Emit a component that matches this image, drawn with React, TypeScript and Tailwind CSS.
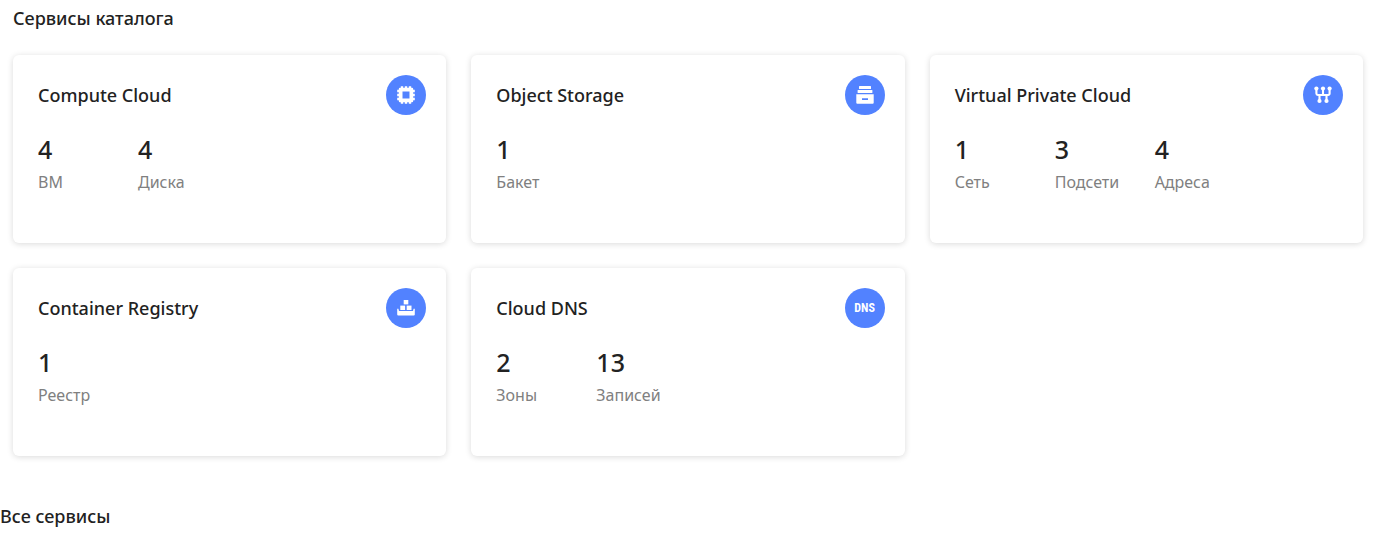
import type { ReactNode } from 'react';

type Stat = { value: number; label: string };
type Service = { name: string; href: string; icon: ReactNode; stats: Stat[] };

function IconSvg({ children }: { children: ReactNode }) {
  return (
    <svg viewBox="0 0 40 40" className="size-10" fill="currentColor" aria-hidden="true">
      {children}
    </svg>
  );
}

const chipIcon = (
  <IconSvg>
    <path
      fillRule="evenodd"
      d="M14.8 11.2h2.4v1.6h1.6v-1.6h2.4v1.6h1.6v-1.6h2.4v1.6h.8a1.2 1.2 0 0 1 1.2 1.2v.8h1.6v2.4h-1.6v1.6h1.6v2.4h-1.6v1.6h1.6v2.4h-1.6v.8a1.2 1.2 0 0 1-1.2 1.2h-.8v1.6h-2.4v-1.6h-1.6v1.6h-2.4v-1.6h-1.6v1.6h-2.4v-1.6H14a1.2 1.2 0 0 1-1.2-1.2v-.8h-1.6v-2.4h1.6v-1.6h-1.6v-2.4h1.6v-1.6h-1.6v-2.4h1.6V14a1.2 1.2 0 0 1 1.2-1.2h.8zM16.5 16.5v7h7v-7z"
    />
  </IconSvg>
);

const storageIcon = (
  <IconSvg>
    <rect x="14" y="11" width="12" height="3" rx=".5" />
    <rect x="12.6" y="15.1" width="14.8" height="2.9" rx=".5" />
    <path fillRule="evenodd" d="M11.3 19.2h17.4v8.6a1 1 0 0 1-1 1H12.3a1 1 0 0 1-1-1zM17 23.2v1.8h6v-1.8z" />
  </IconSvg>
);

const networkIcon = (
  <IconSvg>
    <path
      d="M13.4 13.5V18.6a1.4 1.4 0 0 0 1.4 1.4h10.4a1.4 1.4 0 0 0 1.4-1.4v-5.1M20 13.5V20M16.5 20v6M23.5 20v6"
      fill="none"
      stroke="currentColor"
      strokeWidth="2.1"
    />
    <circle cx="13.4" cy="13.5" r="2.1" />
    <circle cx="20" cy="13.5" r="2.1" />
    <circle cx="26.6" cy="13.5" r="2.1" />
    <circle cx="16.5" cy="26" r="2.1" />
    <circle cx="23.5" cy="26" r="2.1" />
  </IconSvg>
);

const registryIcon = (
  <IconSvg>
    <rect x="17.7" y="12" width="4.6" height="4.4" />
    <rect x="14.3" y="17.6" width="4.8" height="4.4" />
    <rect x="20.7" y="17.6" width="4.8" height="4.4" />
    <path d="M11.2 20.8h1.2l.6 2.2h14l.6-2.2h1.2v5.6a1 1 0 0 1-1 1H12.2a1 1 0 0 1-1-1z" />
  </IconSvg>
);

const dnsIcon = (
  <span className="font-['Liberation_Sans_Narrow','Roboto_Condensed',sans-serif] text-xs leading-none font-bold">
    DNS
  </span>
);

const services: Service[] = [
  {
    name: 'Compute Cloud',
    href: '#compute',
    icon: chipIcon,
    stats: [
      { value: 4, label: 'ВМ' },
      { value: 4, label: 'Диска' },
    ],
  },
  { name: 'Object Storage', href: '#storage', icon: storageIcon, stats: [{ value: 1, label: 'Бакет' }] },
  {
    name: 'Virtual Private Cloud',
    href: '#vpc',
    icon: networkIcon,
    stats: [
      { value: 1, label: 'Сеть' },
      { value: 3, label: 'Подсети' },
      { value: 4, label: 'Адреса' },
    ],
  },
  { name: 'Container Registry', href: '#registry', icon: registryIcon, stats: [{ value: 1, label: 'Реестр' }] },
  {
    name: 'Cloud DNS',
    href: '#dns',
    icon: dnsIcon,
    stats: [
      { value: 2, label: 'Зоны' },
      { value: 13, label: 'Записей' },
    ],
  },
];

function ServiceCard({ name, href, icon, stats }: Service) {
  return (
    <a
      href={href}
      className="block rounded-md bg-white pt-5 pr-5 pb-[49px] pl-[25px] shadow-[0_1px_6px_rgba(0,0,0,0.15)]"
    >
      <div className="flex items-center justify-between">
        <h3 className="text-lg leading-6 font-medium">{name}</h3>
        <span className="flex size-10 shrink-0 items-center justify-center rounded-full bg-[#5282ff] text-white">
          {icon}
        </span>
      </div>
      <dl className="mt-[19px] flex">
        {stats.map((stat) => (
          <div key={stat.label} className="flex w-25 flex-col-reverse">
            <dt className="mt-1.5 text-base leading-6 text-[#808080]">{stat.label}</dt>
            <dd className="text-[25px] leading-[30px] font-medium">{stat.value}</dd>
          </div>
        ))}
      </dl>
    </a>
  );
}

export default function App() {
  return (
    <main className="bg-white pt-1.5 font-['Noto_Sans',sans-serif] text-[#222]">
      <section className="pr-[23px] pl-[13px]">
        <h2 className="text-lg leading-6 font-medium">Сервисы каталога</h2>
        <div className="mt-[25px] grid grid-cols-3 gap-[25px]">
          {services.map((service) => (
            <ServiceCard key={service.name} {...service} />
          ))}
        </div>
      </section>
      <h2 className="mt-12 text-lg leading-6 font-medium">Все сервисы</h2>
    </main>
  );
}
